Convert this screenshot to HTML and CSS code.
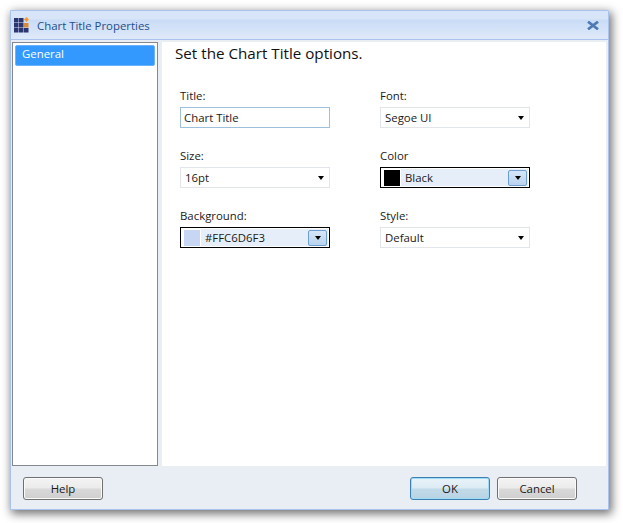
FILE: index.html
```html
<!DOCTYPE html>
<html lang="en">

<head>
    <meta charset="UTF-8">
    <title>Chart Title Properties</title>
    <link rel="stylesheet" href="styles.css">
</head>

<body>

    <div class="window">
        <div class="title-bar">
            <svg class="app-icon" width="16" height="16" viewBox="0 0 16 16">
                <path fill="#2b3570" d="M0 1h4.5v4.500H0zM5 1h4.500v4.500H5zM0 6h4.500v4.500H0zM5 6h4.500v4.500H5zM0 11h4.500v4.500H0zM5 11h4.500v4.500H5zM10 11h4.500v4.500H10z" />
                <path fill="#d98a3c" d="M10 6h4.500v4.500H10z" />
                <path fill="#f59a2e" d="M12.500 0l2.500 2.500-2.500 2.500L10 2.500z" />
            </svg>
            <span class="title-text">Chart Title Properties</span>
            <svg class="close-icon" width="12" height="9" viewBox="0 0 12 9">
                <path fill="none" stroke="#4f79b5" stroke-width="2.6" d="M1 .6l10 7.800M11 .6L1 8.400" />
            </svg>
        </div>

        <div class="main">
            <div class="side-list">
                <div class="side-item">General</div>
            </div>
            <div class="content">
                <h1 class="heading">Set the Chart Title options.</h1>
                <div class="fields">
                    <div class="field">
                        <label>Title:</label>
                        <div class="text-box">Chart Title</div>
                    </div>
                    <div class="field">
                        <label>Font:</label>
                        <div class="combo"><span>Segoe UI</span><i class="arrow"></i></div>
                    </div>
                    <div class="field">
                        <label>Size:</label>
                        <div class="combo"><span>16pt</span><i class="arrow"></i></div>
                    </div>
                    <div class="field">
                        <label>Color</label>
                        <div class="color-combo">
                            <i class="swatch swatch-black"></i>
                            <div class="color-value">
                                <span>Black</span>
                                <b class="drop-button"><i class="arrow"></i></b>
                            </div>
                        </div>
                    </div>
                    <div class="field">
                        <label>Background:</label>
                        <div class="color-combo">
                            <i class="swatch swatch-blue"></i>
                            <div class="color-value">
                                <span>#FFC6D6F3</span>
                                <b class="drop-button"><i class="arrow"></i></b>
                            </div>
                        </div>
                    </div>
                    <div class="field">
                        <label>Style:</label>
                        <div class="combo"><span>Default</span><i class="arrow"></i></div>
                    </div>
                </div>
            </div>
        </div>

        <div class="button-bar">
            <button class="btn">Help</button>
            <div class="button-group">
                <button class="btn btn-default">OK</button>
                <button class="btn">Cancel</button>
            </div>
        </div>
    </div>

</body>

</html>
```

FILE: styles.css
```css
html,
body {
    height: 100%;
}

body {
    margin: 0;
    background-color: #ffffff;
    font-family: "Open Sans", "Noto Sans", sans-serif;
    font-size: 11.4px;
    color: #1a1a1a;
    overflow: hidden;
}

.window {
    width: 599px;
    height: 500px;
    margin: 10px 0 0 10px;
    box-sizing: border-box;
    display: flex;
    flex-direction: column;
    background-color: #e9edf4;
    border: 1px solid #a9c3ee;
    border-radius: 1px;
    box-shadow: 2px 3px 10px 1px rgba(0, 0, 0, 0.55);
}

.title-bar {
    height: 29px;
    flex: none;
    box-sizing: border-box;
    display: flex;
    align-items: center;
    padding: 0 9px 0 3px;
    background: linear-gradient(#d8e5f8 0, #d8e5f8 8px, #c9dcf6 9px, #dfe9f9 100%);
    border-bottom: 1px solid #a9c3ee;
}

.app-icon {
    flex: none;
}

.title-text {
    margin-left: 7px;
    color: #1f4e8c;
    flex: 1;
}

.main {
    flex: 1;
    display: flex;
    min-height: 0;
    padding: 2px 2px 0 1px;
}

.side-list {
    width: 146px;
    flex: none;
    box-sizing: border-box;
    padding: 2px;
    background-color: #ffffff;
    border: 1px solid #84888f;
}

.side-item {
    height: 21px;
    padding-left: 6px;
    line-height: 16px;
    color: #ffffff;
    background-color: #3399ff;
    border: 1px solid #6db3fb;
    border-radius: 2px;
    box-sizing: border-box;
}

.content {
    flex: 1;
    margin-left: 4px;
    padding: 0 13px;
    background-color: #ffffff;
}

.heading {
    margin: 0;
    font-size: 15.2px;
    font-weight: normal;
    line-height: 22px;
    color: #111111;
}

.fields {
    display: grid;
    grid-template-columns: 150px 150px;
    column-gap: 50px;
    row-gap: 19px;
    margin: 23px 0 0 5px;
}

.field label {
    display: block;
    height: 20px;
    line-height: 18px;
}

.text-box,
.combo,
.color-combo {
    width: 150px;
    height: 21px;
    box-sizing: border-box;
    line-height: 19px;
}

.text-box {
    padding-left: 3px;
    background-color: #ffffff;
    border: 1px solid #9fc0dc;
}

.combo {
    display: flex;
    align-items: center;
    justify-content: space-between;
    padding: 0 5px 0 4px;
    background-color: #ffffff;
    border: 1px solid #e2e5ea;
}

.color-combo {
    display: flex;
    padding: 1px;
    background-color: #ffffff;
    border: 1px solid #000000;
}

.swatch {
    width: 16px;
    height: 16px;
    flex: none;
    margin: 1px 1px 0 2px;
}

.swatch-black {
    background-color: #000000;
}

.swatch-blue {
    background-color: #c6d6f3;
}

.color-value {
    flex: 1;
    display: flex;
    align-items: center;
    justify-content: space-between;
    padding: 0 1px 0 4px;
    background-color: #e6eff9;
}

.drop-button {
    width: 19px;
    height: 16px;
    box-sizing: border-box;
    display: flex;
    align-items: center;
    justify-content: center;
    background: linear-gradient(#d6e6f8, #b9d3ee);
    border: 1px solid #6d9fd0;
    border-radius: 2px;
}

.arrow {
    width: 0;
    height: 0;
    border-left: 3.500px solid transparent;
    border-right: 3.500px solid transparent;
    border-top: 4px solid #000000;
}

.button-bar {
    height: 43px;
    flex: none;
    box-sizing: border-box;
    display: flex;
    justify-content: space-between;
    padding: 11px 31px 0 12px;
}

.button-group {
    display: flex;
    gap: 7px;
}

.btn {
    width: 80px;
    height: 23px;
    padding: 0;
    font: inherit;
    color: #1a1a1a;
    background: linear-gradient(#f4f4f4 0, #ebebeb 48%, #d9d9d9 52%, #cfcfcf 100%);
    border: 1px solid #707070;
    border-radius: 3px;
    box-shadow: inset 0 0 0 1px #fafafa;
}

.btn-default {
    background: linear-gradient(#e9f3f9 0, #dcebf4 48%, #c3dbe8 52%, #b8d3e3 100%);
    border-color: #3c7fb1;
    box-shadow: inset 0 0 0 1px #9fdcf5;
}
```
